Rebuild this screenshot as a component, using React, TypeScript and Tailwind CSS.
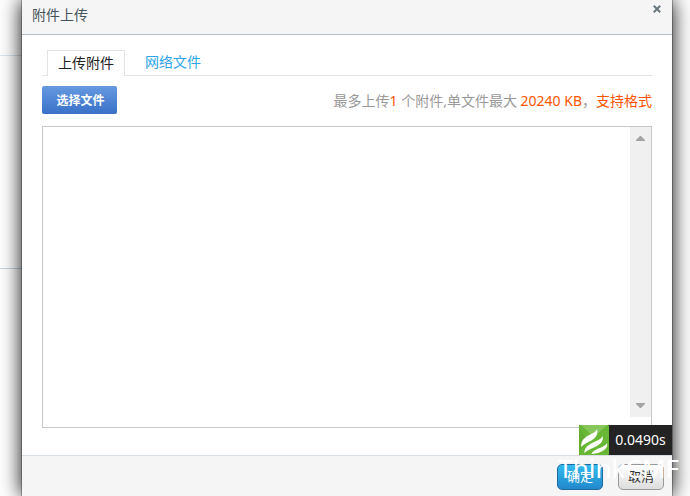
import React from 'react';

interface Tab {
  id: string;
  label: string;
}

const tabs: Tab[] = [
  { id: 'upload', label: '上传附件' },
  { id: 'network', label: '网络文件' },
];

const DialogHeader: React.FC<{ title: string }> = ({ title }) => (
  <header className="flex h-[35px] items-start justify-between border-b border-[#b4bec6] bg-[#f5f5f5] pr-2.5 pl-2.5">
    <h1 className="pt-1 text-sm leading-[22px] text-[#46545c]">{title}</h1>
    <button type="button" aria-label="关闭" className="mt-1 p-px">
      <svg width="8" height="8" viewBox="0 0 8 8" fill="none" stroke="#68787f" strokeWidth="2">
        <path d="M.8.8 7.2 7.2M7.2.8.8 7.2" />
      </svg>
    </button>
  </header>
);

const TabBar: React.FC<{ active: string; onChange: (id: string) => void }> = ({ active, onChange }) => (
  <div role="tablist" className="flex h-[26px] border-b border-[#e3e3e3] pl-[5px]">
    {tabs.map((tab) => (
      <button
        key={tab.id}
        type="button"
        role="tab"
        aria-selected={active === tab.id}
        onClick={() => onChange(tab.id)}
        className={
          active === tab.id
            ? 'mr-2 h-[26px] border border-b-0 border-[#e3e3e3] bg-white px-2.5 pb-0.5 text-sm leading-[22px] text-[#222222]'
            : 'h-[26px] px-3 pb-0.5 text-sm leading-[22px] text-[#2fa4e7]'
        }
      >
        {tab.label}
      </button>
    ))}
  </div>
);

// Empty queue with its always-visible scroll track
const FileQueue: React.FC = () => (
  <div className="flex h-[302px] justify-end border border-[#c8c8c8] bg-white">
    <div className="flex h-[290px] w-[21px] flex-col items-center justify-between bg-[#f0f0f0] py-[9px]">
      <svg width="9" height="5" viewBox="0 0 9 5" fill="#a3a3a3">
        <path d="M4 0h1l4 4v1H0V4z" />
      </svg>
      <svg width="9" height="5" viewBox="0 0 9 5" fill="#a3a3a3">
        <path d="M0 0h9v1L5 5H4L0 1z" />
      </svg>
    </div>
  </div>
);

const TraceBadge: React.FC = () => (
  <div className="absolute right-0 bottom-[41px] flex h-[30px] w-[93px] bg-[#232323]">
    <svg width="30" height="30" viewBox="0 0 30 30">
      <rect width="30" height="30" rx="1" fill="#69b835" />
      <path d="M2 0h26L15 12z" fill="#86c65a" />
      <path d="M0 2v26l8-12z" fill="#62ad32" />
      <g fill="#fff">
        <path d="M18 4C16.500 8 12 8.500 7.500 11.500 3.500 14.500 1.500 18 2.500 22 5 18.500 9 17.500 12.500 15.500 17 12.500 19.500 9 18 4z" />
        <path d="M23.500 11C22 15 17.500 15.500 13 18 8.500 20.500 5 23.500 5.500 28 8 25 12 24 16 22 21 19.500 25 16.500 23.500 11z" />
        <path d="M28 18C26.500 21 23 22 19.500 23.500 16 25 13 26.500 12.500 29 16 28.500 19 28.500 22.500 26.500 26.500 24.500 29 22 28 18z" />
      </g>
    </svg>
    <span className="flex-1 text-center text-sm leading-[30px] text-white">0.0490s</span>
  </div>
);

const App: React.FC = () => {
  const [active, setActive] = React.useState('upload');

  return (
    <div className="relative min-h-screen overflow-hidden bg-white pr-[18px] pl-[22px] font-['Noto_Sans','Noto_Sans_CJK_SC',sans-serif]">
      {/* Page rows behind the dialog */}
      <div className="absolute top-0 left-0 w-[22px]">
        <div className="h-14 border-b border-[#dbe4ed]" />
        <div className="h-[213px] border-b border-[#c5d6e5]" />
      </div>

      <div
        role="dialog"
        aria-label="附件上传"
        className="relative flex min-h-screen flex-col bg-white shadow-[0_0_0_1px_rgba(0,0,0,0.25),0_0_20px_#000]"
      >
        <DialogHeader title="附件上传" />

        <main className="flex-1 px-5 pt-[15px]">
          <TabBar active={active} onChange={setActive} />
          <div className="flex items-center justify-between pt-2.5 pb-3">
            <button
              type="button"
              className="h-7 w-[75px] rounded-xs bg-linear-to-b from-[#6699e0] to-[#3871c8] pt-0.5 pl-0.5 text-xs font-bold text-white"
            >
              选择文件
            </button>
            <p className="pt-0.5 text-sm text-[#999999]">
              最多上传<span className="text-[#ff5500]">1</span> 个附件,单文件最大{' '}
              <span className="text-[#ff5500]">20240 KB</span>，
              <span className="text-[#ff5500]">支持格式</span>
            </p>
          </div>
          <FileQueue />
        </main>

        <footer className="flex h-[41px] items-start justify-end gap-[15px] border-t border-[#dadee5] bg-[#f5f5f5] pt-2 pr-2">
          <button
            type="button"
            className="h-[26px] w-[46px] rounded-[5px] border border-[#1c6a9e] bg-linear-to-b from-[#33bbee] to-[#2288cc] text-[13px] text-white"
          >
            确定
          </button>
          <button
            type="button"
            className="h-[26px] w-[46px] rounded-[5px] border border-[#999999] bg-linear-to-b from-white to-[#dddddd] text-[13px] text-[#333333]"
          >
            取消
          </button>
        </footer>

        <TraceBadge />
        <span className="pointer-events-none absolute right-[-7px] bottom-[14px] text-[26px] leading-7 text-white">
          ThinkCMF
        </span>
      </div>
    </div>
  );
};

export default App;
